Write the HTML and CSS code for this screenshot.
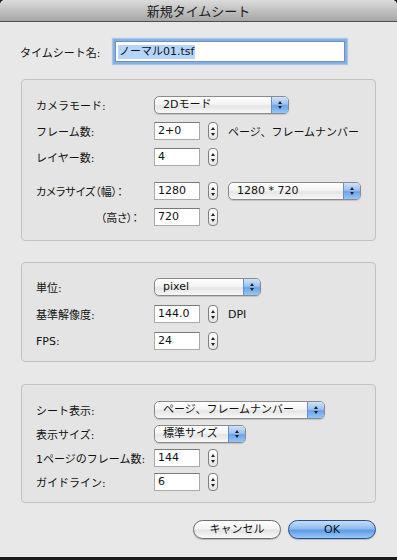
FILE: index.html
```html
<!DOCTYPE html>
<html lang="ja">
<head>
  <meta charset="UTF-8" />
  <title>新規タイムシート</title>
  <link rel="stylesheet" href="styles.css">
</head>
<body>

  <div class="window">
    <!-- Title Bar -->
    <div class="titlebar">新規タイムシート</div>

    <div class="content">
      <!-- Sheet name -->
      <div class="name-row">
        <span class="label">タイムシート名:</span>
        <div class="field name-field"><span class="selected">ノーマル01.tsf</span></div>
      </div>

      <!-- Camera -->
      <div class="group group-camera">
        <div class="row">
          <span class="label">カメラモード:</span>
          <div class="popup w-mode"><span class="popup-text">2Dモード</span><span class="popup-arrows"></span></div>
        </div>
        <div class="row">
          <span class="label">フレーム数:</span>
          <div class="field">2+0</div>
          <span class="stepper"></span>
          <span class="note">ページ、フレームナンバー</span>
        </div>
        <div class="row">
          <span class="label">レイヤー数:</span>
          <div class="field">4</div>
          <span class="stepper"></span>
        </div>
        <div class="row spaced">
          <span class="label narrow">カメラサイズ（幅）：</span>
          <div class="field">1280</div>
          <span class="stepper"></span>
          <div class="popup w-size"><span class="popup-text">1280 * 720</span><span class="popup-arrows"></span></div>
        </div>
        <div class="row">
          <span class="label narrow right">（高さ）：</span>
          <div class="field">720</div>
          <span class="stepper"></span>
        </div>
      </div>

      <!-- Unit -->
      <div class="group group-unit">
        <div class="row">
          <span class="label">単位:</span>
          <div class="popup w-unit"><span class="popup-text">pixel</span><span class="popup-arrows"></span></div>
        </div>
        <div class="row">
          <span class="label">基準解像度:</span>
          <div class="field">144.0</div>
          <span class="stepper"></span>
          <span class="note">DPI</span>
        </div>
        <div class="row">
          <span class="label">FPS:</span>
          <div class="field">24</div>
          <span class="stepper"></span>
        </div>
      </div>

      <!-- Sheet display -->
      <div class="group group-sheet">
        <div class="row">
          <span class="label">シート表示:</span>
          <div class="popup w-sheet"><span class="popup-text">ページ、フレームナンバー</span><span class="popup-arrows"></span></div>
        </div>
        <div class="row">
          <span class="label">表示サイズ:</span>
          <div class="popup w-disp"><span class="popup-text">標準サイズ</span><span class="popup-arrows"></span></div>
        </div>
        <div class="row">
          <span class="label">1ページのフレーム数:</span>
          <div class="field">144</div>
          <span class="stepper"></span>
        </div>
        <div class="row">
          <span class="label">ガイドライン:</span>
          <div class="field">6</div>
          <span class="stepper"></span>
        </div>
      </div>

      <!-- Buttons -->
      <div class="buttons">
        <button class="btn">キャンセル</button>
        <button class="btn btn-ok">OK</button>
      </div>
    </div>
  </div>

</body>
</html>
```

FILE: styles.css
```css
* { margin: 0; padding: 0; box-sizing: border-box; }

body {
  width: 397px;
  height: 560px;
  overflow: hidden;
  background-color: #1b1b1b;
  font-family: "DejaVu Sans", "Noto Sans CJK JP", sans-serif;
  font-size: 11px;
  color: #111;
}

.window {
  height: 557px;
  background-color: #e8e8e8;
  border-radius: 5px 5px 0 0;
  overflow: hidden;
}

.titlebar {
  height: 22px;
  border-bottom: 1px solid #4e4e4e;
  background: linear-gradient(#dcdcdc, #a5a5a5);
  text-align: center;
  font-family: "Noto Sans CJK JP", sans-serif;
  font-size: 13px;
  line-height: 21px;
  color: #202020;
}

.content {
  padding: 19px 21px 0 21px;
}

.label {
  width: 118px;
  flex-shrink: 0;
  white-space: nowrap;
}

.label.narrow {
  font-feature-settings: "palt";
}

.label.right {
  text-align: right;
  padding-right: 16px;
}

/* --- NAME ROW --- */
.name-row {
  display: flex;
  align-items: center;
  height: 21px;
}

.name-row .label {
  width: 95px;
  margin-left: -1px;
}

.name-field {
  width: 230px !important;
  height: 21px !important;
  padding: 1px 2px !important;
  border-color: #6f8fbf !important;
  box-shadow: 0 0 0 2px #86b0e2, 0 0 1px 3px #a9c7ec;
  line-height: 17px !important;
}

.selected {
  background-color: #b5d5fe;
  padding: 0 1px 1px;
}

/* --- GROUPS --- */
.group {
  margin-top: 17px;
  border: 1px solid #c2c2c2;
  border-radius: 4px;
  background-color: #e4e4e4;
  padding: 16px 14px 14px;
  display: flex;
  flex-direction: column;
  gap: 8px;
}

.group-unit {
  margin-top: 21px;
  padding: 15px 14px 11px;
  gap: 9px;
}

.group-sheet {
  margin-top: 22px;
  padding: 16px 14px 11px;
  gap: 6px;
}

.row {
  display: flex;
  align-items: center;
  height: 18px;
}

.row.spaced {
  margin-top: 8px;
}

.note {
  margin-left: 10px;
  white-space: nowrap;
}

/* --- TEXT FIELDS --- */
.field {
  width: 46px;
  height: 18px;
  background-color: #fff;
  border: 1px solid #a9a9a9;
  border-top-color: #7a7a7a;
  padding: 0 3px;
  line-height: 15px;
  white-space: nowrap;
}

/* --- STEPPERS --- */
.stepper {
  width: 10px;
  height: 18px;
  margin-left: 8px;
  border: 1px solid #7f7f7f;
  border-radius: 4px;
  background: linear-gradient(#ffffff, #e4e4e4);
  display: flex;
  flex-direction: column;
  align-items: center;
  justify-content: center;
  gap: 3px;
}

.stepper::before,
.popup-arrows::before {
  content: "";
  border-left: 2px solid transparent;
  border-right: 2px solid transparent;
  border-bottom: 3px solid #222;
}

.stepper::after,
.popup-arrows::after {
  content: "";
  border-left: 2px solid transparent;
  border-right: 2px solid transparent;
  border-top: 3px solid #222;
}

/* --- POPUP BUTTONS --- */
.popup {
  height: 18px;
  display: flex;
  border: 1px solid #8a8a8a;
  border-radius: 5px;
  background: linear-gradient(#ffffff 0%, #f4f4f4 45%, #e5e5e5 55%, #f7f7f7 100%);
  box-shadow: 0 1px 1px rgba(0, 0, 0, 0.15);
  overflow: hidden;
}

.popup-text {
  flex: 1;
  padding-left: 8px;
  line-height: 16px;
  white-space: nowrap;
}

.popup-arrows {
  width: 17px;
  border-left: 1px solid #6b8fc4;
  background: linear-gradient(#cfe2f8 0%, #9cc1ef 45%, #6aa3e8 55%, #94c8f8 100%);
  display: flex;
  flex-direction: column;
  align-items: center;
  justify-content: center;
  gap: 2px;
}

.popup-arrows::before,
.popup-arrows::after {
  border-left-width: 2.5px;
  border-right-width: 2.5px;
}

.w-mode { width: 135px; }
.w-size { width: 133px; margin-left: 10px; }
.w-unit { width: 107px; }
.w-sheet { width: 171px; }
.w-disp { width: 92px; }

/* --- DIALOG BUTTONS --- */
.buttons {
  display: flex;
  justify-content: flex-end;
  gap: 7px;
  margin-top: 17px;
}

.btn {
  width: 88px;
  height: 19px;
  border: 1px solid #6c6c6c;
  border-radius: 10px;
  background: linear-gradient(#ffffff 0%, #f3f3f3 45%, #e3e3e3 55%, #fafafa 100%);
  box-shadow: 0 1px 1px rgba(0, 0, 0, 0.2);
  font-family: "DejaVu Sans", "Noto Sans CJK JP", sans-serif;
  font-size: 11px;
  line-height: 17px;
  color: #111;
}

.btn-ok {
  border-color: #2d4b8c;
  background: linear-gradient(#c4ddf9 0%, #8fbcf0 45%, #5f9be6 55%, #96cbf9 100%);
}
```
